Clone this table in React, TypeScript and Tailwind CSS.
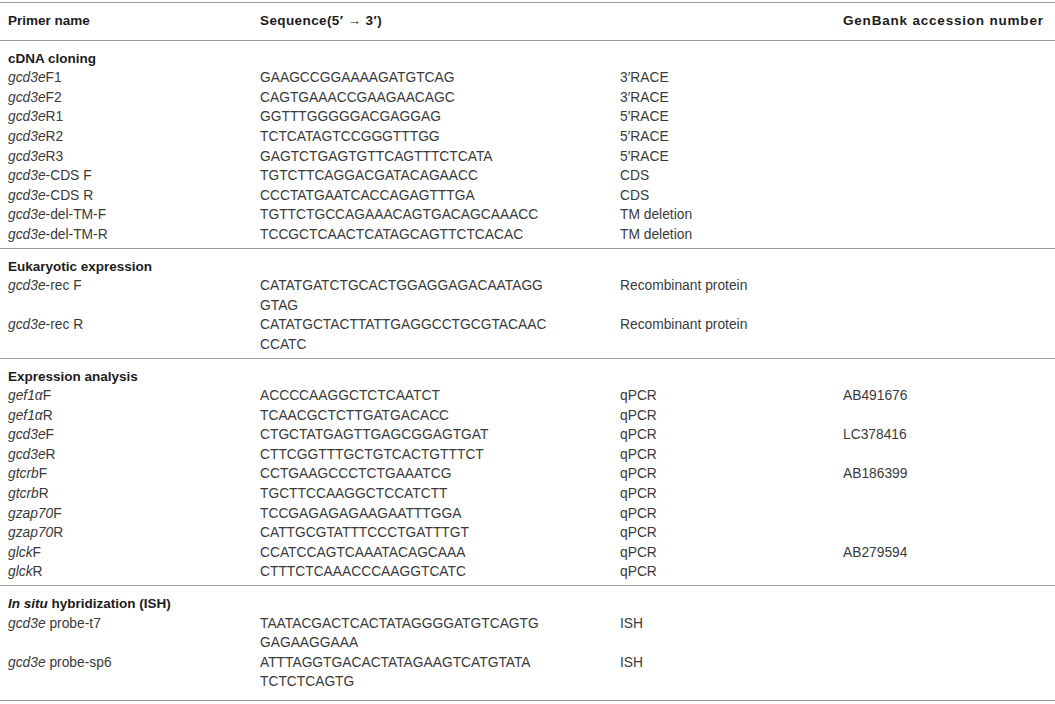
import { Fragment, ReactNode } from 'react';

type Row = { name: ReactNode; seq: string[]; use: string; acc?: string };
type Section = { title: ReactNode; rows: Row[] };

const I = ({ children }: { children: ReactNode }) => <i>{children}</i>;

const SECTIONS: Section[] = [
  {
    title: 'cDNA cloning',
    rows: [
      { name: <><I>gcd3e</I>F1</>, seq: ['GAAGCCGGAAAAGATGTCAG'], use: '3′RACE' },
      { name: <><I>gcd3e</I>F2</>, seq: ['CAGTGAAACCGAAGAACAGC'], use: '3′RACE' },
      { name: <><I>gcd3e</I>R1</>, seq: ['GGTTTGGGGGACGAGGAG'], use: '5′RACE' },
      { name: <><I>gcd3e</I>R2</>, seq: ['TCTCATAGTCCGGGTTTGG'], use: '5′RACE' },
      { name: <><I>gcd3e</I>R3</>, seq: ['GAGTCTGAGTGTTCAGTTTCTCATA'], use: '5′RACE' },
      { name: <><I>gcd3e</I>-CDS F</>, seq: ['TGTCTTCAGGACGATACAGAACC'], use: 'CDS' },
      { name: <><I>gcd3e</I>-CDS R</>, seq: ['CCCTATGAATCACCAGAGTTTGA'], use: 'CDS' },
      { name: <><I>gcd3e</I>-del-TM-F</>, seq: ['TGTTCTGCCAGAAACAGTGACAGCAAACC'], use: 'TM deletion' },
      { name: <><I>gcd3e</I>-del-TM-R</>, seq: ['TCCGCTCAACTCATAGCAGTTCTCACAC'], use: 'TM deletion' },
    ],
  },
  {
    title: 'Eukaryotic expression',
    rows: [
      { name: <><I>gcd3e</I>-rec F</>, seq: ['CATATGATCTGCACTGGAGGAGACAATAGG', 'GTAG'], use: 'Recombinant protein' },
      { name: <><I>gcd3e</I>-rec R</>, seq: ['CATATGCTACTTATTGAGGCCTGCGTACAAC', 'CCATC'], use: 'Recombinant protein' },
    ],
  },
  {
    title: 'Expression analysis',
    rows: [
      { name: <><I>gef1α</I>F</>, seq: ['ACCCCAAGGCTCTCAATCT'], use: 'qPCR', acc: 'AB491676' },
      { name: <><I>gef1α</I>R</>, seq: ['TCAACGCTCTTGATGACACC'], use: 'qPCR' },
      { name: <><I>gcd3e</I>F</>, seq: ['CTGCTATGAGTTGAGCGGAGTGAT'], use: 'qPCR', acc: 'LC378416' },
      { name: <><I>gcd3e</I>R</>, seq: ['CTTCGGTTTGCTGTCACTGTTTCT'], use: 'qPCR' },
      { name: <><I>gtcrb</I>F</>, seq: ['CCTGAAGCCCTCTGAAATCG'], use: 'qPCR', acc: 'AB186399' },
      { name: <><I>gtcrb</I>R</>, seq: ['TGCTTCCAAGGCTCCATCTT'], use: 'qPCR' },
      { name: <><I>gzap70</I>F</>, seq: ['TCCGAGAGAGAAGAATTTGGA'], use: 'qPCR' },
      { name: <><I>gzap70</I>R</>, seq: ['CATTGCGTATTTCCCTGATTTGT'], use: 'qPCR' },
      { name: <><I>glck</I>F</>, seq: ['CCATCCAGTCAAATACAGCAAA'], use: 'qPCR', acc: 'AB279594' },
      { name: <><I>glck</I>R</>, seq: ['CTTTCTCAAACCCAAGGTCATC'], use: 'qPCR' },
    ],
  },
  {
    title: <><I>In situ</I> hybridization (ISH)</>,
    rows: [
      { name: <><I>gcd3e</I> probe-t7</>, seq: ['TAATACGACTCACTATAGGGGATGTCAGTG', 'GAGAAGGAAA'], use: 'ISH' },
      { name: <><I>gcd3e</I> probe-sp6</>, seq: ['ATTTAGGTGACACTATAGAAGTCATGTATA', 'TCTCTCAGTG'], use: 'ISH' },
    ],
  },
];

const cols = 'grid grid-cols-[252px_360px_223px_1fr]';

export default function App() {
  return (
    <div className="bg-white w-[1055px] h-[704px] overflow-hidden text-[13.8px] leading-[19.6px] text-[#3a3a3a]" style={{ fontFamily: '"Liberation Sans", Arial, sans-serif' }}>
      <div className="mt-[2px] border-t border-[#9c9c9c]">
        {/* header */}
        <div className={`${cols} pl-2 pt-2 pb-[9px] font-bold text-[13.5px] text-[#1c1c1c]`}>
          <div>Primer name</div>
          <div className="tracking-[0.4px]">Sequence(5′ → 3′)</div>
          <div></div>
          <div className="tracking-[0.8px]">GenBank accession number</div>
        </div>
        {SECTIONS.map((s, si) => (
          <div key={si} className={`border-t border-[#9c9c9c] pt-2 ${si === SECTIONS.length - 1 ? 'pb-[8px] border-b' : 'pb-[3px]'}`}>
            <div className="pl-2 font-bold text-[13.5px] text-[#1c1c1c]">{s.title}</div>
            {s.rows.map((r, ri) => (
              <div key={ri} className={`${cols} pl-2`}>
                <div>{r.name}</div>
                <div>
                  {r.seq.map((l, li) => (
                    <Fragment key={li}>{l}{li < r.seq.length - 1 && <br />}</Fragment>
                  ))}
                </div>
                <div>{r.use}</div>
                <div>{r.acc}</div>
              </div>
            ))}
          </div>
        ))}
      </div>
    </div>
  );
}
